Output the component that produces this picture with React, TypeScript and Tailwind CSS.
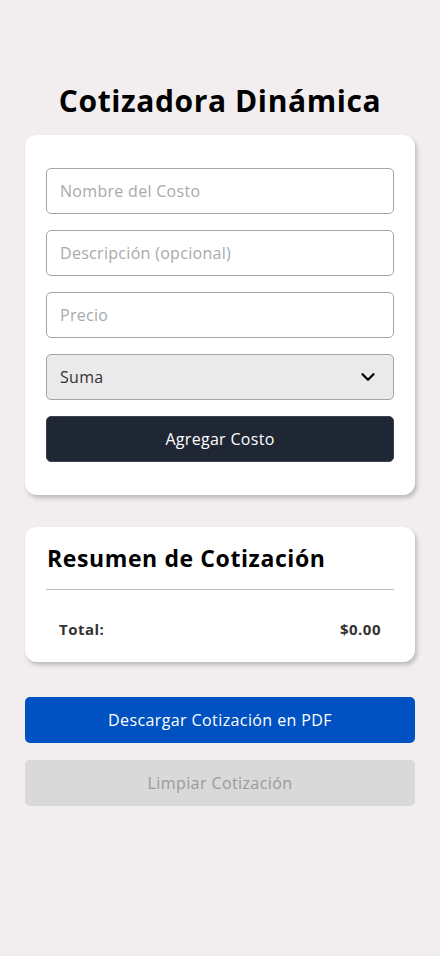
import { ChevronDown } from 'lucide-react';

export default function App() {
  return (
    <div className="min-h-screen bg-[#f2eeef] px-[25px] pt-[80px] pb-10 font-['Open_Sans',sans-serif]">
      <h1 className="text-center text-[30px] font-bold leading-[42px] text-black tracking-[0.6px]">
        Cotizadora Dinámica
      </h1>

      {/* Formulario */}
      <div className="mt-[13px] rounded-[12px] bg-white px-[21px] py-[33px] shadow-[2px_3px_4px_rgba(0,0,0,0.22)]">
        <div className="flex flex-col gap-4 tracking-[0.3px]">
          <input
            placeholder="Nombre del Costo"
            className="h-[46px] w-full rounded-[5px] border border-[#a6a6a6] px-[13px] text-[16px] text-[#333] outline-none placeholder:text-[#a9a9a9]"
          />
          <input
            placeholder="Descripción (opcional)"
            className="h-[46px] w-full rounded-[5px] border border-[#a6a6a6] px-[13px] text-[16px] text-[#333] outline-none placeholder:text-[#a9a9a9]"
          />
          <input
            placeholder="Precio"
            className="h-[46px] w-full rounded-[5px] border border-[#a6a6a6] px-[13px] text-[16px] text-[#333] outline-none placeholder:text-[#a9a9a9]"
          />
          <div className="flex h-[46px] w-full items-center justify-between rounded-[5px] border border-[#a6a6a6] bg-[#eaeaea] pl-[13px] pr-[14px] text-[16px] text-[#333]">
            <span>Suma</span>
            <ChevronDown className="h-[22px] w-[22px] text-black" strokeWidth={2.5} />
          </div>
          <button className="h-[46px] w-full rounded-[5px] border border-[#3a4250] bg-[#1f2735] text-[16px] text-white">
            Agregar Costo
          </button>
        </div>
      </div>

      {/* Resumen */}
      <div className="mt-[32px] rounded-[12px] bg-white px-[21px] pt-[16px] pb-[21px] shadow-[2px_3px_4px_rgba(0,0,0,0.22)]">
        <h2 className="pl-px text-[23px] font-bold leading-[30px] tracking-[0.6px] text-black">
          Resumen de Cotización
        </h2>
        <div className="mt-[16px] h-px bg-[#bdbdbd]" />
        <div className="mt-[28px] flex items-center justify-between px-[13px] text-[15px] font-bold tracking-[0.5px] text-[#333]">
          <span>Total:</span>
          <span>$0.00</span>
        </div>
      </div>

      {/* Acciones */}
      <div className="mt-[35px] flex flex-col gap-[17px] tracking-[0.4px]">
        <button className="h-[46px] w-full rounded-[5px] bg-[#0051c2] text-[16px] text-white">
          Descargar Cotización en PDF
        </button>
        <button className="h-[46px] w-full rounded-[5px] bg-[#d9d9d9] text-[16px] text-[#9a9a9a]">
          Limpiar Cotización
        </button>
      </div>
    </div>
  );
}
